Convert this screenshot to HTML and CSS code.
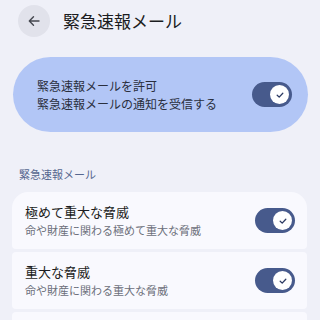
FILE: index.html
```html
<!DOCTYPE html>
<html lang="ja">
<head>
<meta charset="utf-8">
<link rel="stylesheet" href="styles.css">
</head>
<body>
<header class="topbar">
  <div class="back">
    <svg width="16" height="16" viewBox="0 0 16 16"><path d="M13 8H3.5M7.5 3.8L3.3 8l4.2 4.2" fill="none" stroke="#44474f" stroke-width="1.4" stroke-linecap="round" stroke-linejoin="round"/></svg>
  </div>
  <h1 class="title">緊急速報メール</h1>
</header>

<section class="banner">
  <div class="texts">
    <div class="line">緊急速報メールを許可</div>
    <div class="line">緊急速報メールの通知を受信する</div>
  </div>
  <div class="switch"><span class="thumb"><svg width="10" height="10" viewBox="0 0 10 10"><path d="M2.2 5.2l2 1.9 3.6-3.8" fill="none" stroke="#2c3a63" stroke-width="1.3" stroke-linecap="round" stroke-linejoin="round"/></svg></span></div>
</section>

<div class="section-label">緊急速報メール</div>

<div class="list">
  <div class="card first">
    <div class="texts">
      <div class="ctitle">極めて重大な脅威</div>
      <div class="csub">命や財産に関わる極めて重大な脅威</div>
    </div>
    <div class="switch"><span class="thumb"><svg width="10" height="10" viewBox="0 0 10 10"><path d="M2.2 5.2l2 1.9 3.6-3.8" fill="none" stroke="#2c3a63" stroke-width="1.3" stroke-linecap="round" stroke-linejoin="round"/></svg></span></div>
  </div>
  <div class="card">
    <div class="texts">
      <div class="ctitle">重大な脅威</div>
      <div class="csub">命や財産に関わる重大な脅威</div>
    </div>
    <div class="switch"><span class="thumb"><svg width="10" height="10" viewBox="0 0 10 10"><path d="M2.2 5.2l2 1.9 3.6-3.8" fill="none" stroke="#2c3a63" stroke-width="1.3" stroke-linecap="round" stroke-linejoin="round"/></svg></span></div>
  </div>
  <div class="card"></div>
</div>
</body>
</html>
```
FILE: styles.css
```css
html, body {
  margin: 0;
  padding: 0;
  overflow: hidden;
  background: #eff0f8;
  font-family: "Noto Sans CJK JP", "Noto Sans", sans-serif;
  color: #1b1c21;
}
.topbar {
  display: flex;
  align-items: center;
  gap: 13px;
  padding: 5px 0 0 18px;
  height: 32px;
}
.back {
  width: 32px;
  height: 32px;
  border-radius: 50%;
  background: #e1e2eb;
  display: flex;
  align-items: center;
  justify-content: center;
}
.title {
  margin: 0;
  font-size: 17px;
  font-weight: 400;
  line-height: 24px;
  color: #1b1c21;
}
.banner {
  margin: 20px 12px 0 13px;
  height: 75px;
  border-radius: 38px;
  background: #b2c6f6;
  display: flex;
  align-items: center;
  justify-content: space-between;
  padding: 0 16px 0 24px;
}
.banner .line {
  font-size: 12px;
  line-height: 18px;
  color: #2a2f3d;
}
.switch {
  width: 40px;
  height: 25px;
  border-radius: 13px;
  background: #475a8c;
  display: flex;
  align-items: center;
  justify-content: flex-end;
  padding-right: 3px;
  box-sizing: border-box;
  flex: none;
}
.thumb {
  width: 19px;
  height: 19px;
  border-radius: 50%;
  background: #ffffff;
  display: flex;
  align-items: center;
  justify-content: center;
}
.section-label {
  margin: 34px 0 0 19px;
  font-size: 11px;
  line-height: 16px;
  color: #56678f;
}
.list {
  display: flex;
  flex-direction: column;
  gap: 3px;
  margin: 10px 13px 0 12px;
}
.card {
  height: 57px;
  flex: none;
  background: #f9f9fe;
  border-radius: 4px;
  display: flex;
  align-items: center;
  justify-content: space-between;
  padding: 0 12px 0 13px;
}
.card.first {
  border-radius: 16px 16px 4px 4px;
}
.ctitle {
  font-size: 13px;
  line-height: 18px;
  color: #1b1c21;
}
.csub {
  font-size: 11px;
  line-height: 18px;
  color: #6c6f7a;
}
```
